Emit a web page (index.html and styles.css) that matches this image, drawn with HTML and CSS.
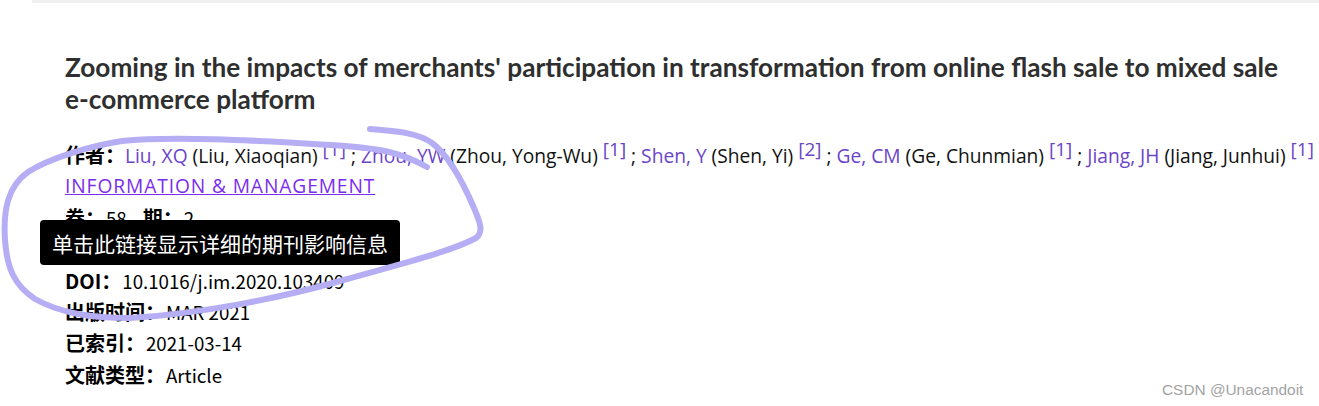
FILE: index.html
```html
<!DOCTYPE html>
<html lang="zh-CN">
<head>
<meta charset="utf-8">
<title>Record</title>
<link rel="stylesheet" href="styles.css">
</head>
<body>
<div class="topbar"></div>
<main class="record">
  <h1 class="title">Zooming in the impacts of merchants' participation in transformation from online flash sale to mixed sale e-commerce platform</h1>
  <div class="authors"><span class="label">作者：</span><a class="author" href="#">Liu, XQ</a> (Liu, Xiaoqian) <sup class="ref">[1]</sup> ; <a class="author" href="#">Zhou, YW</a> (Zhou, Yong-Wu) <sup class="ref">[1]</sup> ; <a class="author" href="#">Shen, Y</a> (Shen, Yi) <sup class="ref">[2]</sup> ; <a class="author" href="#">Ge, CM</a> (Ge, Chunmian) <sup class="ref">[1]</sup> ; <a class="author" href="#">Jiang, JH</a> (Jiang, Junhui) <sup class="ref">[1]</sup></div>
  <div class="journal"><a class="journal-link" href="#">INFORMATION &amp; MANAGEMENT</a></div>
  <div class="field"><span class="label">卷：</span><span class="value">58</span><span class="label label-next">期：</span><span class="value">2</span></div>
  <div class="field"><span class="label">文献号：</span><span class="value">103409</span></div>
  <div class="field"><span class="label">DOI：</span><span class="value">10.1016/j.im.2020.103409</span></div>
  <div class="field"><span class="label">出版时间：</span><span class="value">MAR 2021</span></div>
  <div class="field"><span class="label">已索引：</span><span class="value">2021-03-14</span></div>
  <div class="field"><span class="label">文献类型：</span><span class="value">Article</span></div>
  <div class="field field-more"><span class="label">地址：</span></div>

  <div class="tooltip">单击此链接显示详细的期刊影响信息</div>
  <svg class="scribble" width="500" height="340" viewBox="0 0 500 340" aria-hidden="true">
    <path d="M427 167 C400 152 380 148 330 145 C250 140 170 136 122 141 C90 146 50 158 28 172 C8 186 3 210 5 240 C7 268 14 285 35 299 C60 313 90 318 130 318 C200 314 280 298 340 281 C400 264 450 252 476 238 C484 232 480 222 474 208 C462 180 448 155 432 143 C420 134 400 131 370 129" fill="none" stroke="#b6aef5" stroke-width="6" stroke-linecap="round" stroke-linejoin="round"/>
  </svg>
</main>
<div class="watermark">CSDN @Unacandoit</div>
</body>
</html>
```

FILE: styles.css
```css
html, body {
  margin: 0;
  padding: 0;
  background: #ffffff;
}
body {
  width: 1319px;
  height: 406px;
  overflow: hidden;
  position: relative;
  font-family: "Noto Sans CJK SC", "Noto Sans", sans-serif;
  color: #000;
}
.topbar {
  margin-left: 32px;
  height: 3px;
  background: #efefef;
}
.record {
  position: relative;
  padding: 48px 24px 0 65px;
}
.title {
  margin: 0;
  font-family: Lato, "Noto Sans", sans-serif;
  font-weight: 700;
  font-size: 26.2px;
  line-height: 32px;
  color: #2f2f2f;
}
.authors {
  margin-top: 24px;
  white-space: nowrap;
  font-family: "Open Sans", "Noto Sans", sans-serif;
  font-size: 19.2px;
  line-height: 31.4px;
  height: 31.4px;
  color: #111;
}
.label {
  font-family: "Noto Sans CJK SC", sans-serif;
  font-weight: 700;
  font-size: 20px;
  color: #000;
}
.author {
  color: #6a45c8;
  text-decoration: none;
}
.ref {
  color: #6a45c8;
  font-size: 19px;
  line-height: 0;
  vertical-align: 7px;
}
.journal {
  font-family: "Open Sans", "Noto Sans", sans-serif;
  font-size: 19.2px;
  letter-spacing: 0.9px;
  line-height: 31.4px;
  height: 31.4px;
}
.journal-link {
  color: #7a2cf0;
  text-decoration: underline;
}
.field {
  font-size: 18.7px;
  line-height: 31.4px;
  height: 31.4px;
  white-space: nowrap;
}
.value {
  margin-left: 1px;
}
.label-next {
  margin-left: 16px;
}
.field-more {
  margin-top: 10px;
}
.tooltip {
  position: absolute;
  left: 40px;
  top: 217px;
  height: 45px;
  padding: 0 12px;
  display: flex;
  align-items: center;
  background: #000;
  color: #fff;
  border-radius: 4px;
  font-family: "Noto Sans CJK SC", sans-serif;
  font-size: 21px;
}
.scribble {
  position: absolute;
  left: 0;
  top: -3px;
  pointer-events: none;
}
.watermark {
  position: absolute;
  left: 1162px;
  top: 381px;
  font-family: "Liberation Sans", Arial, sans-serif;
  font-size: 15.4px;
  color: #a3a3a3;
}
```
